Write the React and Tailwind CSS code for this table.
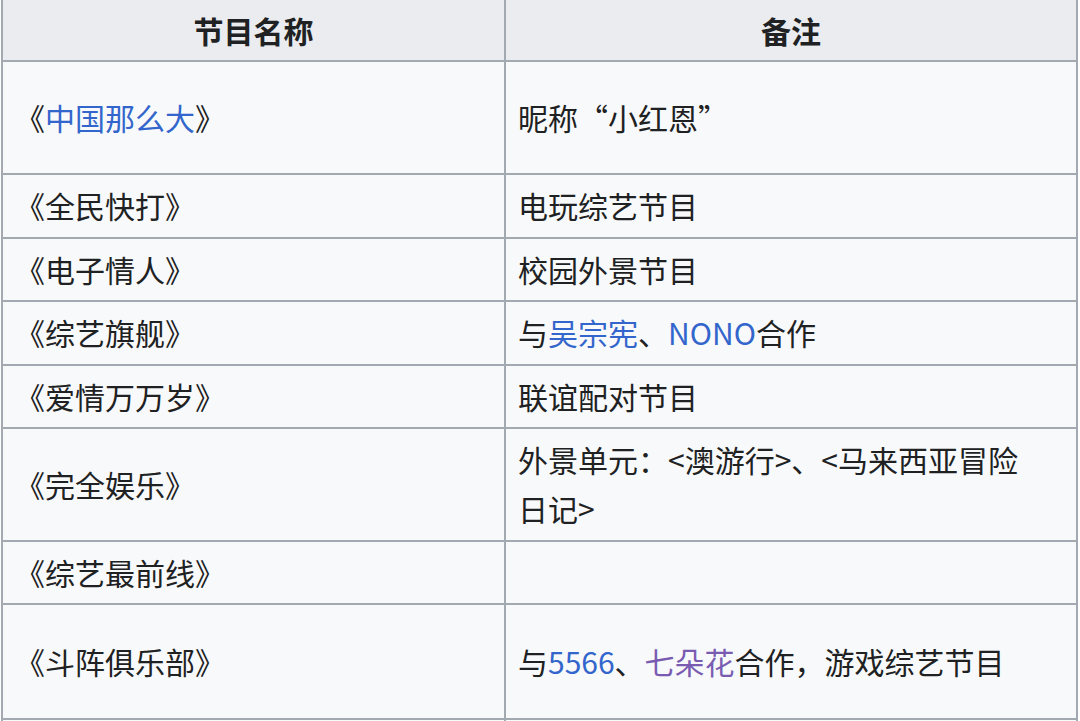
import React from 'react';

const A = ({ children, visited }) => (
  <a href="#" className={visited ? 'text-[#795cb2]' : 'text-[#3366cc]'}>{children}</a>
);

const rows = [
  { name: <>《<A>中国那么大</A>》</>, note: '昵称“小红恩”', h: 'h-[113px]' },
  { name: '《全民快打》', note: '电玩综艺节目' },
  { name: '《电子情人》', note: '校园外景节目' },
  { name: '《综艺旗舰》', note: <>与<A>吴宗宪</A>、<A>NONO</A>合作</> },
  { name: '《爱情万万岁》', note: '联谊配对节目' },
  { name: '《完全娱乐》', note: <>外景单元：&lt;澳游行&gt;、&lt;马来西亚冒险<br />日记&gt;</> },
  { name: '《综艺最前线》', note: '' },
  { name: '《斗阵俱乐部》', note: <>与<A>5566</A>、<A visited>七朵花</A>合作，游戏综艺节目</>, h: 'h-[115px]' },
  { name: '', note: '', h: 'h-[60px]' },
];

const App = () => {
  return (
    <div className="w-[1080px] h-[721px] overflow-hidden bg-white" style={{ fontFamily: '"Noto Sans CJK SC", "Noto Sans", sans-serif' }}>
      <table className="ml-[1px] -mt-[2px] w-[1077px] border-collapse text-[30px] leading-[49px] text-[#202122]">
        <thead>
          <tr className="bg-[#eaecf0]">
            <th className="w-[503px] border-2 border-[#a2a9b1] px-3 py-[5.5px] text-center font-bold">节目名称</th>
            <th className="border-2 border-[#a2a9b1] px-3 py-[5.5px] text-center font-bold">备注</th>
          </tr>
        </thead>
        <tbody className="bg-[#f8f9fa]">
          {rows.map((r, i) => (
            <tr key={i} className={r.h}>
              <td className="border-2 border-[#a2a9b1] px-3 py-[6.25px] align-middle">{r.name}</td>
              <td className="border-2 border-[#a2a9b1] px-3 py-[6.25px] align-middle">{r.note}</td>
            </tr>
          ))}
        </tbody>
      </table>
    </div>
  );
};

export default App;
